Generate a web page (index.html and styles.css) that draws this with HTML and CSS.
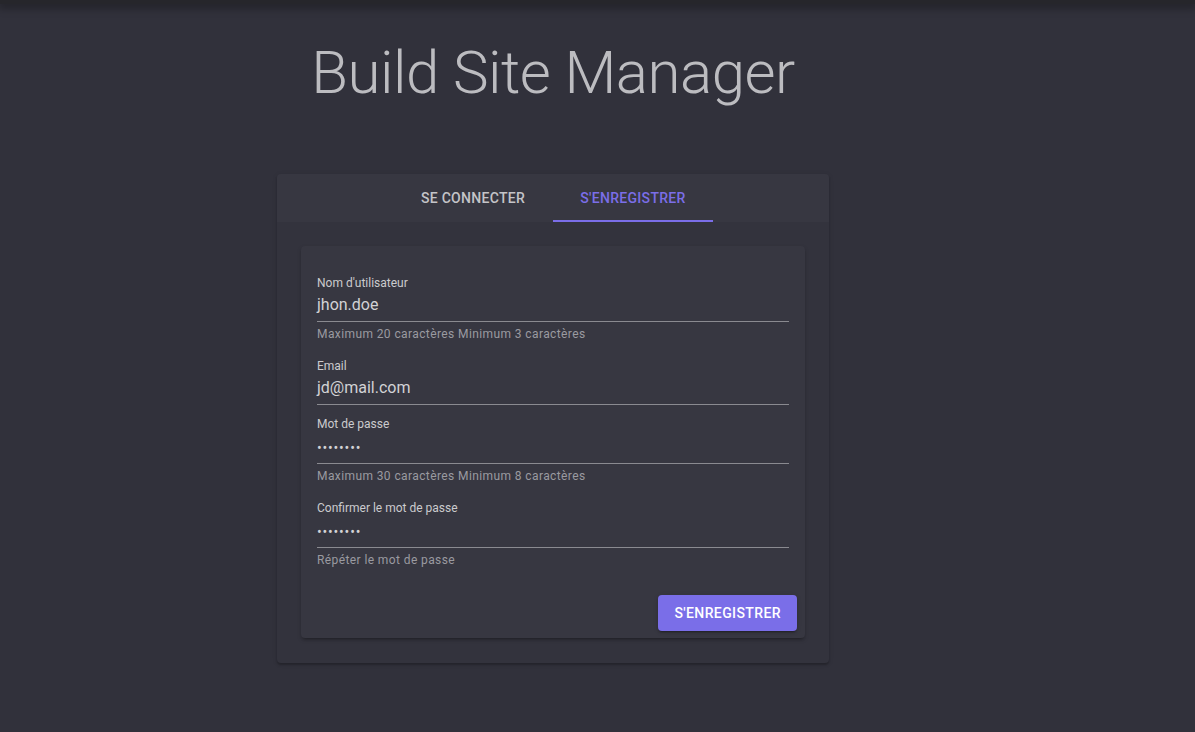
FILE: index.html
```html
<!DOCTYPE html>
<html lang="fr">
<head>
<meta charset="utf-8">
<title>Build Site Manager</title>
<link rel="stylesheet" href="styles.css">
</head>
<body>
<div class="topbar"></div>
<main class="page">
  <h1 class="title">Build Site Manager</h1>
  <section class="card">
    <nav class="tabs">
      <div class="tab">Se connecter</div>
      <div class="tab active">S'enregistrer</div>
    </nav>
    <div class="panel">
      <form class="form">
        <div class="field">
          <label class="label">Nom d'utilisateur</label>
          <div class="input">jhon.doe</div>
          <div class="hint">Maximum 20 caractères Minimum 3 caractères</div>
        </div>
        <div class="field">
          <label class="label">Email</label>
          <div class="input">jd@mail.com</div>
        </div>
        <div class="field">
          <label class="label">Mot de passe</label>
          <div class="input dots">••••••••</div>
          <div class="hint">Maximum 30 caractères Minimum 8 caractères</div>
        </div>
        <div class="field">
          <label class="label">Confirmer le mot de passe</label>
          <div class="input dots">••••••••</div>
          <div class="hint">Répéter le mot de passe</div>
        </div>
        <div class="actions">
          <button type="button" class="btn">S'enregistrer</button>
        </div>
      </form>
    </div>
  </section>
</main>
</body>
</html>
```

FILE: styles.css
```css
html, body {
  margin: 0;
  padding: 0;
}
body {
  background: #31313b;
  font-family: Roboto, "Liberation Sans", sans-serif;
  min-height: 732px;
  overflow: hidden;
}
.topbar {
  height: 4px;
  background: #26262b;
  box-shadow: 0 2px 8px 2px rgba(0, 0, 0, 0.35);
  position: relative;
  z-index: 1;
}
.page {
  width: 1106px;
  display: flex;
  flex-direction: column;
  align-items: center;
}
.title {
  margin: 29px 0 0;
  font-size: 60px;
  font-weight: 300;
  line-height: 80px;
  color: #bcbcc0;
  letter-spacing: -0.5px;
}
.card {
  margin-top: 61px;
  width: 552px;
  background: #33333d;
  border-radius: 4px;
  box-shadow: 0 2px 2px rgba(0,0,0,0.2), 0 1px 5px rgba(0,0,0,0.12);
  padding-bottom: 25px;
}
.tabs {
  display: flex;
  justify-content: center;
  height: 48px;
  background: #373741;
  border-radius: 4px 4px 0 0;
}
.tab {
  width: 160px;
  display: flex;
  align-items: center;
  justify-content: center;
  font-size: 14px;
  font-weight: 500;
  letter-spacing: 0.3px;
  text-transform: uppercase;
  color: #c4c4c8;
  box-sizing: border-box;
}
.tab.active {
  color: #7b6ee8;
  border-bottom: 2px solid #7b6ee8;
  padding-top: 2px;
}
.panel {
  margin: 24px 24px 0;
  background: #373741;
  border-radius: 4px;
  box-shadow: 0 3px 3px -2px rgba(0,0,0,0.25), 0 2px 4px rgba(0,0,0,0.18);
}
.form {
  display: flex;
  flex-direction: column;
  padding-top: 29px;
}
.field {
  display: flex;
  flex-direction: column;
  margin: 0 16px 11px;
}
.label {
  font-size: 12px;
  line-height: 16px;
  height: 16px;
  color: #cbcbce;
}
.input {
  margin-top: 4px;
  font-size: 16px;
  line-height: 20px;
  height: 20px;
  padding-bottom: 6px;
  color: #d2d2d5;
  border-bottom: 1px solid #8a8a90;
}
.input.dots {
  font-size: 14px;
  line-height: 17px;
  height: 17px;
  padding-top: 4px;
  letter-spacing: 0.8px;
}
.hint {
  margin: 6px 0 7px;
  font-size: 12px;
  line-height: 12px;
  height: 12px;
  letter-spacing: 0.4px;
  color: #9a9aa0;
}
.actions {
  display: flex;
  justify-content: flex-end;
  padding: 11px 8px 7px;
}
.btn {
  height: 36px;
  padding: 0 16px;
  border: 0;
  border-radius: 4px;
  background: #7a6ee8;
  color: #ffffff;
  font-family: Roboto, "Liberation Sans", sans-serif;
  font-size: 14px;
  font-weight: 500;
  letter-spacing: 0.4px;
  text-transform: uppercase;
  box-shadow: 0 3px 1px -2px rgba(0,0,0,0.2), 0 2px 2px rgba(0,0,0,0.14), 0 1px 5px rgba(0,0,0,0.12);
}
```
